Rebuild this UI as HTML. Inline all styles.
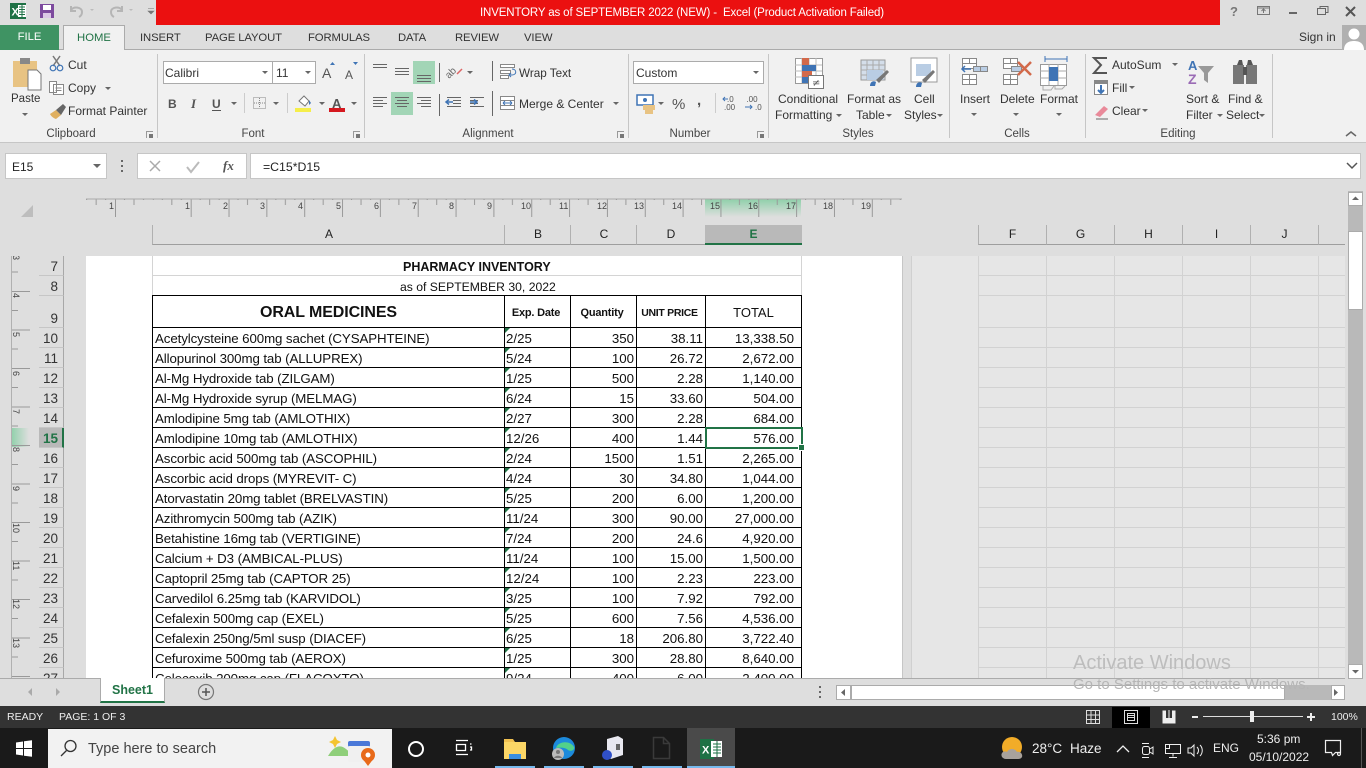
<!DOCTYPE html>
<html><head><meta charset="utf-8"><title>Excel</title>
<style>
*{box-sizing:border-box}
html,body{margin:0;padding:0;width:1366px;height:768px;overflow:hidden;background:#dedede}
body{font-family:"Liberation Sans",sans-serif;font-size:12px;color:#333;position:relative}
.a{position:absolute}
.t{position:absolute;white-space:nowrap;line-height:14px}
.tb{font-size:11.3px;letter-spacing:-.1px}
.sep{position:absolute;width:1px;background:#c6c6c6}
.arr{position:absolute;width:0;height:0;border-left:3px solid transparent;border-right:3px solid transparent;border-top:3px solid #666}
.gl{position:absolute;color:#444;top:127px;line-height:14px;transform:translateX(-50%);white-space:nowrap;font-size:11.5px}
.lau{position:absolute;top:131px;width:7px;height:7px;border-left:1px solid #999;border-top:1px solid #999}
.lau:after{content:"";position:absolute;right:0;bottom:0;width:4px;height:4px;background:#777}
.hd{position:absolute;top:225px;height:20px;border-bottom:1px solid #9e9e9e;border-left:1px solid #b0b0b0;color:#222;text-align:center;line-height:18px;font-size:12px}
#sheet{position:absolute;left:0;top:256px;width:1345px;height:422px;overflow:hidden}
.rn{position:absolute;left:39px;width:25px;height:20px;line-height:22px;border-bottom:1px solid #c6c6c6;border-right:1px solid #a8a8a8;text-align:right;padding-right:5px;color:#333;font-size:13.5px;background:#dedede}
table{position:absolute;left:152px;top:39px;border-collapse:collapse;table-layout:fixed;width:649px;font-family:"Liberation Sans",sans-serif;color:#111}
td{border:1px solid #000;height:20px;padding:3px 0 0;font-size:13.3px;line-height:16px;white-space:nowrap;overflow:hidden;position:relative}
td.n{padding-left:2px;letter-spacing:-.1px}
td.d{padding-left:1px}
td.d:before{content:"";position:absolute;left:0;top:0;border-top:5px solid #217346;border-right:5px solid transparent}
td.r{text-align:right;padding-right:2px}
td.m{text-align:right;padding-right:7px}
tr.h td{height:32px;text-align:center;font-weight:bold;font-size:11px;letter-spacing:-.2px;padding:2px 3px 0 0;line-height:18px}
</style></head><body>

<!-- title bar -->
<div class="a" style="left:156px;top:0;width:1064px;height:25px;background:#eb1010"></div>
<div class="t" style="left:480px;top:6px;color:#fff;font-size:11.5px;letter-spacing:-.14px">INVENTORY as of SEPTEMBER 2022 (NEW) -&nbsp; Excel (Product Activation Failed)</div>
<svg class="a" style="left:0;top:0" width="156" height="25">
<rect x="10" y="3" width="16" height="16" fill="#1e7145"/><rect x="18" y="5" width="8" height="12" fill="#fff"/>
<path d="M19 7h6M19 9.500h6M19 12h6M19 14.500h6M22 5v12" stroke="#1e7145" stroke-width="1"/>
<text x="11.500" y="15.500" font-family="Liberation Sans" font-size="11" font-weight="bold" fill="#fff">X</text>
<rect x="40" y="4" width="14" height="14" fill="#7d4a9e"/><rect x="43" y="5" width="8" height="5" fill="#fff"/><rect x="43" y="13" width="8" height="5" fill="#dcc8e6"/>
<path d="M71 6v5h5M71 10c3-4 11-3 11 2 0 2-1 4-3 5" fill="none" stroke="#b5b5b5" stroke-width="2"/>
<path d="M90 9l2 2 2-2z" fill="#bbb"/>
<path d="M122 6v5h-5M122 10c-3-4-11-3-11 2 0 2 1 4 3 5" fill="none" stroke="#b5b5b5" stroke-width="2"/>
<path d="M129 9l2 2 2-2z" fill="#bbb"/>
<path d="M148 8.500h6M148 11l3 3 3-3z" stroke="#777" fill="#777" stroke-width=".6"/>
</svg>
<svg class="a" style="left:1225px;top:0" width="141" height="25">
<text x="5" y="16" font-family="Liberation Sans" font-size="13" font-weight="bold" fill="#777">?</text>
<rect x="32.500" y="6.500" width="12" height="8" fill="none" stroke="#777"/><path d="M38.500 13V9M36.500 11l2-2 2 2M32 8h13" stroke="#777" fill="none"/>
<path d="M64 13h8" stroke="#666" stroke-width="2"/>
<path d="M92.500 8.500h8v6h-8zM95 8V6.500h8v6h-2" fill="none" stroke="#666"/>
<path d="M121 7l9 9M130 7l-9 9" stroke="#555" stroke-width="2"/>
</svg>

<!-- tabs -->
<div class="a" style="left:0;top:25px;width:1366px;height:25px;background:#dedede;border-bottom:1px solid #ababab"></div>
<div class="a" style="left:0;top:25px;width:59px;height:25px;background:#3f9363;color:#fff;text-align:center;line-height:25px;font-size:11.3px">FILE</div>
<div class="a" style="left:63px;top:25px;width:62px;height:26px;background:#f1f1f1;border:1px solid #ababab;border-bottom:none;color:#217346;text-align:center;line-height:24px;font-size:11.3px">HOME</div>
<div class="t tb" style="left:140px;top:31px">INSERT</div>
<div class="t tb" style="left:205px;top:31px">PAGE LAYOUT</div>
<div class="t tb" style="left:308px;top:31px">FORMULAS</div>
<div class="t tb" style="left:398px;top:31px">DATA</div>
<div class="t tb" style="left:455px;top:31px">REVIEW</div>
<div class="t tb" style="left:524px;top:31px">VIEW</div>
<div class="t" style="left:1299px;top:30px">Sign in</div>
<svg class="a" style="left:1342px;top:25px" width="24" height="25"><rect width="24" height="25" fill="#b0b0b0"/><circle cx="12" cy="9" r="5.500" fill="#fff"/><path d="M2 25c0-7 5-9 10-9s10 2 10 9z" fill="#fff"/></svg>

<!-- ribbon -->
<div class="a" style="left:0;top:50px;width:1366px;height:93px;background:#f1f1f1;border-bottom:1px solid #c6c6c6"></div>
<div class="a" style="left:64px;top:49px;width:60px;height:2px;background:#f1f1f1"></div>
<div class="sep" style="left:157px;top:54px;height:84px"></div>
<div class="sep" style="left:364px;top:54px;height:84px"></div>
<div class="sep" style="left:628px;top:54px;height:84px"></div>
<div class="sep" style="left:768px;top:54px;height:84px"></div>
<div class="sep" style="left:949px;top:54px;height:84px"></div>
<div class="sep" style="left:1085px;top:54px;height:84px"></div>
<div class="sep" style="left:1272px;top:54px;height:84px"></div>
<div class="gl" style="left:71px">Clipboard</div><div class="lau" style="left:146px"></div>
<div class="gl" style="left:253px">Font</div><div class="lau" style="left:353px"></div>
<div class="gl" style="left:488px">Alignment</div><div class="lau" style="left:617px"></div>
<div class="gl" style="left:690px">Number</div><div class="lau" style="left:757px"></div>
<div class="gl" style="left:858px">Styles</div>
<div class="gl" style="left:1017px">Cells</div>
<div class="gl" style="left:1178px">Editing</div>
<svg class="a" style="left:1345px;top:130px" width="12" height="8"><path d="M1 6l5-4 5 4" fill="none" stroke="#666" stroke-width="1.500"/></svg>

<!-- clipboard -->
<svg class="a" style="left:0;top:52px" width="160" height="75">
<rect x="13" y="9" width="24" height="26" fill="#e8c383"/><rect x="20" y="6" width="10" height="6" fill="#888"/>
<path d="M28 18h9l4 4v16H28z" fill="#fff" stroke="#777"/>
<path d="M53 14l7-10M60 14l-7-10" stroke="#777" stroke-width="1.500"/><circle cx="53" cy="16" r="2.800" fill="none" stroke="#3f74b5" stroke-width="1.200"/><circle cx="60" cy="16" r="2.800" fill="none" stroke="#3f74b5" stroke-width="1.200"/>
<path d="M49.500 29.500h7v11h-7zM53.500 32.500h10v10h-10z" fill="#fff" stroke="#888"/><path d="M55.500 36h6M55.500 38.500h6" stroke="#888"/>
<path d="M50 62l6-4 5 5-5 4c-3-1-5-3-6-5z" fill="#e0b060"/><path d="M56 58l7-6 3 3-5 8z" fill="#666"/>
</svg>
<div class="t" style="left:68px;top:58px">Cut</div>
<div class="t" style="left:68px;top:81px">Copy</div><div class="arr" style="left:105px;top:87px"></div>
<div class="t" style="left:68px;top:104px">Format Painter</div>
<div class="t" style="left:11px;top:92px;font-size:11.500px">Paste</div><div class="arr" style="left:22px;top:113px"></div>

<!-- font -->
<div class="a" style="left:163px;top:61px;width:110px;height:23px;background:#fff;border:1px solid #ababab"></div>
<div class="a" style="left:272px;top:61px;width:44px;height:23px;background:#fff;border:1px solid #ababab"></div>
<div class="t" style="left:165px;top:66px">Calibri</div><div class="t" style="left:276px;top:66px">11</div>
<div class="arr" style="left:262px;top:71px"></div><div class="arr" style="left:305px;top:71px"></div>
<div class="t" style="left:322px;top:66px;font-size:14px;color:#555">A</div>
<div class="t" style="left:345px;top:68px;font-size:12px;color:#555">A</div>
<svg class="a" style="left:320px;top:60px" width="40" height="10"><path d="M10 5l2.500-3 2.500 3z" fill="#3f74b5"/><path d="M33 2l2.500 3 2.500-3z" fill="#3f74b5"/></svg>
<svg class="a" style="left:160px;top:90px" width="204" height="30">
<text x="8" y="18" font-family="Liberation Sans" font-size="12" font-weight="bold" fill="#555">B</text>
<text x="31" y="18" font-family="Liberation Serif" font-size="13" font-style="italic" font-weight="bold" fill="#555">I</text>
<text x="52" y="18" font-family="Liberation Sans" font-size="12" font-weight="bold" fill="#555">U</text><path d="M52 20.500h9" stroke="#555"/>
<path d="M71 12l3 3 3-3z" fill="#666"/><path d="M84.500 3v20M127.500 3v20" stroke="#ccc"/>
<rect x="93.500" y="7.500" width="12" height="11" fill="none" stroke="#888" stroke-dasharray="1 1"/><path d="M99.500 8v10M94 13h11" stroke="#888" stroke-dasharray="1 1"/>
<path d="M113 12l3 3 3-3z" fill="#666"/>
<path d="M139 11l5-5 5 5-4 5z" fill="#fff" stroke="#777"/><path d="M149 10l2 3-2 2z" fill="#3f74b5"/><rect x="135" y="18" width="16" height="4" fill="#f5ee4a"/>
<path d="M159 12l3 3 3-3z" fill="#666"/>
<text x="172" y="18" font-family="Liberation Sans" font-size="13" font-weight="bold" fill="#555">A</text><rect x="169" y="18" width="16" height="4" fill="#d5181f"/>
<path d="M191 12l3 3 3-3z" fill="#666"/>
</svg>

<!-- alignment -->
<div class="a" style="left:413px;top:61px;width:22px;height:23px;background:#a2d5b6"></div>
<div class="a" style="left:391px;top:92px;width:22px;height:23px;background:#a2d5b6"></div>
<svg class="a" style="left:365px;top:55px" width="265" height="65">
<g stroke="#666" fill="none">
<path d="M8 9.500h14M8 12.500h14"/><path d="M30 13.500h14M30 16.500h14M30 19.500h14"/><path d="M52 20.500h14M52 23.500h14M52 26.500h14"/>
<path d="M8 42.500h14M8 45.500h10M8 48.500h14M8 51.500h10"/><path d="M30 42.500h14M32 45.500h10M30 48.500h14M32 51.500h10"/><path d="M52 42.500h14M56 45.500h10M52 48.500h14M56 51.500h10"/>
<path d="M74.500 8v19M74.500 39v22"/>
<path d="M82 42.500h14M88 45.500h8M88 48.500h8M82 51.500h14"/><path d="M105 42.500h14M105 45.500h8M105 48.500h8M105 51.500h14"/>
<path d="M127.500 6v20M127.500 36v25"/>
</g>
<text x="84" y="24" font-family="Liberation Sans" font-size="10" fill="#666" transform="rotate(-45 84 24)">ab</text>
<path d="M92 19l5-5" stroke="#d66" stroke-width="1.500"/><path d="M102 16l3 3 3-3z" fill="#666"/>
<path d="M81 47h7M84 44.500l-3 2.500 3 2.500" stroke="#3f74b5" fill="none" stroke-width="1.500"/>
<path d="M105 47h7M109 44.500l3 2.500-3 2.500" stroke="#3f74b5" fill="none" stroke-width="1.500"/>
<rect x="135.500" y="9.500" width="14" height="3" fill="#fff" stroke="#888"/><rect x="135.500" y="15.500" width="10" height="3" fill="#fff" stroke="#888"/><rect x="135.500" y="20.500" width="8" height="3" fill="#fff" stroke="#888"/><path d="M147 14c5 0 5 6 0 6h-2M146 18l-2 2 2 2" fill="none" stroke="#3f74b5"/>
<rect x="135.500" y="41.500" width="14" height="13" fill="#fff" stroke="#888"/><path d="M135 45.500h15M135 50.500h15" stroke="#888"/><path d="M138 48h9M138 48l2-2M138 48l2 2M147 48l-2-2M147 48l-2 2" stroke="#3f74b5" fill="none"/>
<path d="M248 47l3 3 3-3z" fill="#666"/>
</svg>
<div class="t" style="left:519px;top:67px;font-size:11.700px">Wrap Text</div>
<div class="t" style="left:519px;top:97px">Merge &amp; Center</div>

<!-- number -->
<div class="a" style="left:633px;top:61px;width:131px;height:23px;background:#fff;border:1px solid #ababab"></div>
<div class="t" style="left:636px;top:66px">Custom</div><div class="arr" style="left:753px;top:71px"></div>
<svg class="a" style="left:630px;top:90px" width="136" height="30">
<rect x="7" y="5" width="16" height="10" fill="#fff" stroke="#3f74b5" stroke-width="1.500"/><circle cx="15" cy="10" r="2" fill="#3f74b5"/><path d="M13 15h12v5H13zM15 20h8v4h-8z" fill="#e8c383"/>
<path d="M28 12l3 3 3-3z" fill="#666"/>
<text x="42" y="19" font-family="Liberation Sans" font-size="15" fill="#555">%</text>
<text x="67" y="15" font-family="Liberation Sans" font-size="15" font-weight="bold" fill="#555">,</text>
<path d="M85.500 3v20" stroke="#ccc"/>
<text x="97" y="12" font-family="Liberation Sans" font-size="8" fill="#555">.0</text><text x="94" y="20" font-family="Liberation Sans" font-size="8" fill="#555">.00</text>
<path d="M93 9h5M95 7l-2 2 2 2" stroke="#3f74b5" fill="none"/>
<text x="122" y="12" font-family="Liberation Sans" font-size="8" fill="#555" text-anchor="middle">.00</text><text x="125" y="20" font-family="Liberation Sans" font-size="8" fill="#555">.0</text>
<path d="M115 17h7M120 15l2 2-2 2" stroke="#3f74b5" fill="none"/>
</svg>

<!-- styles icons -->
<svg class="a" style="left:770px;top:52px" width="180" height="45">
<rect x="25.500" y="6.500" width="27" height="25" fill="#fff" stroke="#999"/><path d="M32 6v25M39 6v25M46 6v25M25 13h27M25 19h27M25 25h27" stroke="#bbb"/>
<rect x="32" y="6" width="7" height="7" fill="#d2694a"/><rect x="32" y="13" width="14" height="6" fill="#3f74b5"/><rect x="32" y="19" width="10" height="6" fill="#d2694a"/><rect x="32" y="25" width="7" height="6" fill="#3f74b5"/>
<rect x="38.500" y="23.500" width="15" height="13" fill="#fff" stroke="#777"/><text x="42" y="34" font-family="DejaVu Sans" font-size="10" fill="#555">≠</text>
<rect x="91" y="8" width="24" height="20" fill="#d4deea" stroke="#999"/><path d="M97 8v20M103 8v20M109 8v20M91 13h24M91 18h24M91 23h24" stroke="#aaa"/><rect x="97" y="18" width="16" height="10" fill="#b9cde4"/>
<path d="M100 34c0-4 3-6 6-4l-1 4z" fill="#3f74b5"/><path d="M106 28l11-10 2 2-10 11z" fill="#777"/>
<rect x="141" y="6" width="26" height="24" fill="#fff" stroke="#999"/><rect x="146" y="12" width="15" height="12" fill="#b9cde4"/>
<path d="M146 35c0-4 3-6 6-4l-1 4z" fill="#3f74b5"/><path d="M152 28l11-10 2 2-10 11z" fill="#777"/>
</svg>
<div class="t" style="left:778px;top:92px">Conditional</div>
<div class="t" style="left:775px;top:108px">Formatting</div><div class="arr" style="left:836px;top:114px"></div>
<div class="t" style="left:847px;top:92px">Format as</div>
<div class="t" style="left:856px;top:108px">Table</div><div class="arr" style="left:886px;top:114px"></div>
<div class="t" style="left:914px;top:92px">Cell</div>
<div class="t" style="left:904px;top:108px">Styles</div><div class="arr" style="left:937px;top:114px"></div>

<!-- cells -->
<svg class="a" style="left:950px;top:52px" width="135" height="45">
<g fill="#fff" stroke="#888"><path d="M12.500 6.500h14v10h-14zM12.500 11.500h14M19.500 6.500v5"/><path d="M12.500 22.500h14v10h-14zM12.500 27.500h14M19.500 22.500v10"/><rect x="23.500" y="14.500" width="14" height="5" fill="#b9cde4"/><path d="M30.500 14v6"/></g>
<path d="M21 17h-9M15 14l-3 3 3 3" stroke="#3f74b5" stroke-width="1.500" fill="none"/>
<g fill="#fff" stroke="#888"><path d="M53.500 6.500h14v10h-14zM53.500 11.500h14M60.500 6.500v5"/><path d="M53.500 22.500h14v10h-14zM53.500 27.500h14M60.500 22.500v10"/><rect x="61.500" y="14.500" width="10" height="5" fill="#b9cde4"/></g>
<path d="M68 10l13 13M81 10l-13 13" stroke="#d2694a" stroke-width="2.500"/>
<path d="M95 7h22M95 4v6M117 4v6" stroke="#3f74b5" fill="none"/>
<rect x="90.500" y="12.500" width="26" height="21" fill="#fff" stroke="#999"/><path d="M99 12v21M108 12v21M90 19h27M90 26h27" stroke="#aaa"/><rect x="99" y="15" width="9" height="14" fill="#3f74b5"/><path d="M93 34v4h8l3-4M105 34v3h7l3-3" fill="none" stroke="#aaa"/>
</svg>
<div class="t" style="left:960px;top:92px">Insert</div><div class="arr" style="left:971px;top:113px"></div>
<div class="t" style="left:1000px;top:92px">Delete</div><div class="arr" style="left:1013px;top:113px"></div>
<div class="t" style="left:1040px;top:92px">Format</div><div class="arr" style="left:1056px;top:113px"></div>

<!-- editing -->
<svg class="a" style="left:1086px;top:52px" width="190" height="70">
<path d="M21 6H8l7 7-7 8h13" fill="none" stroke="#555" stroke-width="2"/>
<rect x="8.500" y="28.500" width="13" height="14" fill="#fff" stroke="#888"/><rect x="8" y="28" width="14" height="4" fill="#888"/><path d="M15 33v8M12 38l3 3 3-3" stroke="#3f74b5" stroke-width="2" fill="none"/>
<path d="M9 63l9-9 4 3-8 8z" fill="#e98a9a"/><path d="M10 67h12" stroke="#666"/>
<text x="102" y="18" font-family="Liberation Sans" font-size="13" font-weight="bold" fill="#3f74b5">A</text>
<text x="102" y="32" font-family="Liberation Sans" font-size="14" font-weight="bold" fill="#9a6bb5">Z</text>
<path d="M112 14h16l-6 7v10l-4-3v-7z" fill="#999"/>
<path d="M151 13l2-5h3l1 5zM161 13l1-5h3l2 5z" fill="#555"/><rect x="147" y="13" width="11" height="19" fill="#777"/><rect x="160" y="13" width="11" height="19" fill="#777"/><rect x="157" y="15" width="4" height="8" fill="#555"/>
</svg>
<div class="t" style="left:1112px;top:58px">AutoSum</div><div class="arr" style="left:1172px;top:63px"></div>
<div class="t" style="left:1112px;top:81px">Fill</div><div class="arr" style="left:1129px;top:86px"></div>
<div class="t" style="left:1112px;top:104px">Clear</div><div class="arr" style="left:1142px;top:109px"></div>
<div class="t" style="left:1186px;top:92px">Sort &amp;</div>
<div class="t" style="left:1186px;top:108px">Filter</div><div class="arr" style="left:1217px;top:114px"></div>
<div class="t" style="left:1228px;top:92px">Find &amp;</div>
<div class="t" style="left:1226px;top:108px">Select</div><div class="arr" style="left:1259px;top:114px"></div>

<!-- formula bar -->
<div class="a" style="left:5px;top:153px;width:102px;height:26px;background:#fff;border:1px solid #c6c6c6"></div>
<div class="t" style="left:12px;top:160px;color:#222">E15</div>
<div class="arr" style="left:93px;top:164px;border-left-width:4px;border-right-width:4px;border-top-width:4px"></div>
<svg class="a" style="left:118px;top:158px" width="8" height="16"><path d="M4 2v2M4 7v2M4 12v2" stroke="#666" stroke-width="2"/></svg>
<div class="a" style="left:137px;top:153px;width:110px;height:26px;background:#fff;border:1px solid #c6c6c6"></div>
<svg class="a" style="left:140px;top:155px" width="105" height="22">
<path d="M10 6l10 10M20 6l-10 10" stroke="#aaa" stroke-width="1.500"/><path d="M47 12l4 5 8-10" stroke="#bbb" stroke-width="2" fill="none"/>
<text x="83" y="15" font-family="Liberation Serif" font-size="13" font-style="italic" font-weight="bold" fill="#555">fx</text>
</svg>
<div class="a" style="left:250px;top:153px;width:1111px;height:26px;background:#fff;border:1px solid #c6c6c6"></div>
<div class="t" style="left:263px;top:160px;color:#222;font-size:12.300px">=C15*D15</div>
<svg class="a" style="left:1346px;top:161px" width="12" height="9"><path d="M1 2l5 5 5-5" fill="none" stroke="#555" stroke-width="1.500"/></svg>

<!-- corner -->
<svg class="a" style="left:20px;top:204px" width="14" height="13"><path d="M13 1v12H1z" fill="#bdbdbd"/></svg>

<!-- ruler top -->
<div class="a" style="left:705px;top:199px;width:96px;height:18px;background:linear-gradient(#8fd0aa,#dedede)"></div>
<svg class="a" style="left:86px;top:198px" width="816" height="20">
<defs><pattern id="rt" x="29" y="0" width="37.840" height="20" patternUnits="userSpaceOnUse">
<path d="M.5 1v18" stroke="#999"/><path d="M19 1v6" stroke="#999"/><path d="M9.500 1v1M28.500 1v1" stroke="#888"/></pattern></defs>
<rect x="0" y="0" width="816" height="20" fill="url(#rt)"/>
<rect x="66" y="2" width="2" height="18" fill="#dedede"/>
<path d="M0 1h816" stroke="#aaa"/>
</svg>
<svg class="a" style="left:100px;top:199px" width="810" height="16" font-family="Liberation Sans" font-size="9" fill="#444">
<text x="9" y="10">1</text><text x="85" y="10">1</text><text x="123" y="10">2</text><text x="160" y="10">3</text><text x="198" y="10">4</text><text x="236" y="10">5</text><text x="274" y="10">6</text><text x="312" y="10">7</text><text x="349" y="10">8</text><text x="387" y="10">9</text><text x="421" y="10">10</text><text x="459" y="10">11</text><text x="497" y="10">12</text><text x="534" y="10">13</text><text x="572" y="10">14</text><text x="610" y="10">15</text><text x="648" y="10">16</text><text x="686" y="10">17</text><text x="723" y="10">18</text><text x="761" y="10">19</text>
</svg>

<!-- column headers -->
<div class="hd" style="left:152px;width:353px">A</div>
<div class="hd" style="left:504px;width:67px">B</div>
<div class="hd" style="left:570px;width:67px">C</div>
<div class="hd" style="left:636px;width:69px">D</div>
<div class="hd" style="left:705px;width:97px;background:#b9b9b9;border-left:none;border-bottom:2px solid #217346;color:#217346;font-weight:bold;height:20px">E</div>
<div class="hd" style="left:978px;width:68px">F</div>
<div class="hd" style="left:1046px;width:68px">G</div>
<div class="hd" style="left:1114px;width:68px">H</div>
<div class="hd" style="left:1182px;width:68px">I</div>
<div class="hd" style="left:1250px;width:68px">J</div>
<div class="hd" style="left:1318px;width:27px"></div>

<!-- sheet -->
<div id="sheet">
<!-- left ruler -->
<div class="a" style="left:11px;top:172px;width:18px;height:19px;background:linear-gradient(90deg,#8fd0aa,#dedede)"></div>
<svg class="a" style="left:10px;top:0" width="20" height="422">
<defs><pattern id="rl" x="0" y="35" width="20" height="38.500" patternUnits="userSpaceOnUse"><path d="M1 .5h19" stroke="#999"/><path d="M1 19.500h7" stroke="#999"/></pattern></defs>
<rect width="20" height="422" fill="url(#rl)"/><path d="M1.500 0v422" stroke="#b0b0b0"/>
<g font-family="Liberation Sans" font-size="9" fill="#444">
<text transform="translate(3 -1) rotate(90)">3</text><text transform="translate(3 37) rotate(90)">4</text><text transform="translate(3 76) rotate(90)">5</text><text transform="translate(3 115) rotate(90)">6</text><text transform="translate(3 153) rotate(90)">7</text><text transform="translate(3 191) rotate(90)">8</text><text transform="translate(3 230) rotate(90)">9</text><text transform="translate(3 267) rotate(90)">10</text><text transform="translate(3 305) rotate(90)">11</text><text transform="translate(3 343) rotate(90)">12</text><text transform="translate(3 382) rotate(90)">13</text></g>
</svg>
<!-- row numbers -->
<div class="rn" style="top:0">7</div>
<div class="rn" style="top:20px">8</div>
<div class="rn" style="top:40px;height:32px;line-height:46px">9</div>
<div class="rn" style="top:72px">10</div>
<div class="rn" style="top:92px">11</div>
<div class="rn" style="top:112px">12</div>
<div class="rn" style="top:132px">13</div>
<div class="rn" style="top:152px">14</div>
<div class="rn" style="top:172px;background:#b9b9b9;color:#217346;font-weight:bold;border-right:2px solid #217346;padding-right:4px">15</div>
<div class="rn" style="top:192px">16</div>
<div class="rn" style="top:212px">17</div>
<div class="rn" style="top:232px">18</div>
<div class="rn" style="top:252px">19</div>
<div class="rn" style="top:272px">20</div>
<div class="rn" style="top:292px">21</div>
<div class="rn" style="top:312px">22</div>
<div class="rn" style="top:332px">23</div>
<div class="rn" style="top:352px">24</div>
<div class="rn" style="top:372px">25</div>
<div class="rn" style="top:392px">26</div>
<div class="rn" style="top:412px">27</div>
<!-- page -->
<div class="a" style="left:86px;top:0;width:816px;height:422px;background:#fff"></div>
<div class="a" style="left:902px;top:0;width:1px;height:422px;background:#c6c6c6"></div>
<div class="a" style="left:152px;top:19px;width:650px;height:1px;background:#d4d4d4"></div>
<div class="a" style="left:152px;top:0;width:1px;height:39px;background:#d4d4d4"></div>
<div class="a" style="left:801px;top:0;width:1px;height:39px;background:#d4d4d4"></div>
<!-- outside grid -->
<div class="a" style="left:911px;top:0;width:434px;height:422px;background-color:#e6e6e6;border-left:1px solid #d0d0d0"></div>
<svg class="a" style="left:911px;top:0" width="434" height="422">
<path d="M67.500 0v422M135.500 0v422M203.500 0v422M271.500 0v422M339.500 0v422M407.500 0v422" stroke="#d2d2d2"/>
<path d="M67 19.500h367M67 39.500h367M67 71.500h367M67 91.500h367M67 111.500h367M67 131.500h367M67 151.500h367M67 171.500h367M67 191.500h367M67 211.500h367M67 231.500h367M67 251.500h367M67 271.500h367M67 291.500h367M67 311.500h367M67 331.500h367M67 351.500h367M67 371.500h367M67 391.500h367M67 411.500h367" stroke="#d2d2d2"/>
</svg>
<div class="t" style="left:403px;top:4px;font-weight:bold;font-size:12.500px;color:#111">PHARMACY INVENTORY</div>
<div class="t" style="left:400px;top:24px;font-size:12.200px;color:#111">as of SEPTEMBER 30, 2022</div>
<table>
<colgroup><col style="width:352px"><col style="width:66px"><col style="width:66px"><col style="width:69px"><col style="width:96px"></colgroup>
<tr class="h"><td style="font-size:16px;letter-spacing:-.1px;padding-right:0">ORAL MEDICINES</td><td>Exp. Date</td><td>Quantity</td><td style="font-size:10.500px;letter-spacing:-.3px">UNIT PRICE</td><td style="font-weight:normal;font-size:13px;letter-spacing:0;padding-right:0">TOTAL</td></tr>
<tr><td class="n">Acetylcysteine 600mg sachet (CYSAPHTEINE)</td><td class="d">2/25</td><td class="r">350</td><td class="r">38.11</td><td class="m">13,338.50</td></tr>
<tr><td class="n">Allopurinol 300mg tab (ALLUPREX)</td><td class="d">5/24</td><td class="r">100</td><td class="r">26.72</td><td class="m">2,672.00</td></tr>
<tr><td class="n">Al-Mg Hydroxide tab (ZILGAM)</td><td class="d">1/25</td><td class="r">500</td><td class="r">2.28</td><td class="m">1,140.00</td></tr>
<tr><td class="n">Al-Mg Hydroxide syrup (MELMAG)</td><td class="d">6/24</td><td class="r">15</td><td class="r">33.60</td><td class="m">504.00</td></tr>
<tr><td class="n">Amlodipine 5mg tab (AMLOTHIX)</td><td class="d">2/27</td><td class="r">300</td><td class="r">2.28</td><td class="m">684.00</td></tr>
<tr><td class="n">Amlodipine 10mg tab (AMLOTHIX)</td><td class="d">12/26</td><td class="r">400</td><td class="r">1.44</td><td class="m">576.00</td></tr>
<tr><td class="n">Ascorbic acid 500mg tab (ASCOPHIL)</td><td class="d">2/24</td><td class="r">1500</td><td class="r">1.51</td><td class="m">2,265.00</td></tr>
<tr><td class="n">Ascorbic acid drops (MYREVIT- C)</td><td class="d">4/24</td><td class="r">30</td><td class="r">34.80</td><td class="m">1,044.00</td></tr>
<tr><td class="n">Atorvastatin 20mg tablet (BRELVASTIN)</td><td class="d">5/25</td><td class="r">200</td><td class="r">6.00</td><td class="m">1,200.00</td></tr>
<tr><td class="n">Azithromycin 500mg tab (AZIK)</td><td class="d">11/24</td><td class="r">300</td><td class="r">90.00</td><td class="m">27,000.00</td></tr>
<tr><td class="n">Betahistine 16mg tab (VERTIGINE)</td><td class="d">7/24</td><td class="r">200</td><td class="r">24.6</td><td class="m">4,920.00</td></tr>
<tr><td class="n">Calcium + D3 (AMBICAL-PLUS)</td><td class="d">11/24</td><td class="r">100</td><td class="r">15.00</td><td class="m">1,500.00</td></tr>
<tr><td class="n">Captopril 25mg tab (CAPTOR 25)</td><td class="d">12/24</td><td class="r">100</td><td class="r">2.23</td><td class="m">223.00</td></tr>
<tr><td class="n">Carvedilol 6.25mg tab (KARVIDOL)</td><td class="d">3/25</td><td class="r">100</td><td class="r">7.92</td><td class="m">792.00</td></tr>
<tr><td class="n">Cefalexin 500mg cap (EXEL)</td><td class="d">5/25</td><td class="r">600</td><td class="r">7.56</td><td class="m">4,536.00</td></tr>
<tr><td class="n">Cefalexin 250ng/5ml susp (DIACEF)</td><td class="d">6/25</td><td class="r">18</td><td class="r">206.80</td><td class="m">3,722.40</td></tr>
<tr><td class="n">Cefuroxime 500mg tab (AEROX)</td><td class="d">1/25</td><td class="r">300</td><td class="r">28.80</td><td class="m">8,640.00</td></tr>
<tr><td class="n">Celecoxib 200mg cap (FLACOXTO)</td><td class="d">9/24</td><td class="r">400</td><td class="r">6.00</td><td class="m">2,400.00</td></tr>
</table>
<!-- selection -->
<div class="a" style="left:705px;top:171px;width:98px;height:22px;border:2px solid #217346"></div>
<div class="a" style="left:799px;top:189px;width:5px;height:5px;background:#217346;outline:1px solid #fff"></div>
</div>

<!-- vertical scrollbar -->
<div class="a" style="left:1348px;top:191px;width:15px;height:488px;background:#b9b9b9"></div>
<div class="a" style="left:1348px;top:192px;width:15px;height:14px;background:#fff;border:1px solid #ababab"></div>
<div class="a" style="left:1348px;top:231px;width:15px;height:79px;background:#fff;border:1px solid #ababab"></div>
<div class="a" style="left:1348px;top:664px;width:15px;height:15px;background:#fff;border:1px solid #ababab"></div>
<svg class="a" style="left:1348px;top:191px" width="15" height="488"><path d="M4 9l3.500-3.500L11 9z" fill="#666"/><path d="M4 479l3.500 3.500L11 479z" fill="#666"/></svg>

<!-- tab bar -->
<div class="a" style="left:0;top:678px;width:1345px;height:28px;background:#dedede;border-top:1px solid #ababab"></div>
<div class="a" style="left:1345px;top:679px;width:21px;height:27px;background:#dedede"></div>
<svg class="a" style="left:24px;top:685px" width="40" height="14"><path d="M8 3L4 7l4 4zM32 3l4 4-4 4z" fill="#aaa"/></svg>
<div class="a" style="left:100px;top:678px;width:65px;height:25px;background:#fff;border:1px solid #ababab;border-top:none;border-bottom:2px solid #217346;color:#217346;font-weight:bold;text-align:center;line-height:25px;font-size:12.500px">Sheet1</div>
<svg class="a" style="left:197px;top:683px" width="18" height="18"><circle cx="9" cy="9" r="7.500" fill="none" stroke="#777" stroke-width="1.200"/><path d="M5 9h8M9 5v8" stroke="#555" stroke-width="1.500"/></svg>
<svg class="a" style="left:816px;top:684px" width="8" height="16"><path d="M4 2v2M4 7v2M4 12v2" stroke="#666" stroke-width="2"/></svg>
<div class="a" style="left:836px;top:685px;width:508px;height:15px;background:#b9b9b9"></div>
<div class="a" style="left:851px;top:685px;width:434px;height:15px;background:#fff;border:1px solid #ababab"></div>
<div class="a" style="left:836px;top:685px;width:15px;height:15px;background:#fff;border:1px solid #ababab"></div>
<div class="a" style="left:1331px;top:685px;width:14px;height:15px;background:#fff;border:1px solid #ababab"></div>
<svg class="a" style="left:836px;top:685px" width="510" height="15"><path d="M9 4L5 7.500 9 11zM498 4l4 3.500-4 3.500z" fill="#666"/></svg>

<!-- activate -->
<div class="t" style="left:1073px;top:651px;font-size:20px;line-height:24px;color:#bdbdbd">Activate Windows</div>
<div class="t" style="left:1073px;top:677px;font-size:15px;line-height:16px;color:#b5b5b5">Go to Settings to activate Windows.</div>

<!-- status -->
<div class="a" style="left:0;top:706px;width:1366px;height:22px;background:#333"></div>
<div class="t" style="left:7px;top:710px;color:#eee;font-size:10.500px">READY</div>
<div class="t" style="left:59px;top:710px;color:#eee;font-size:10.500px">PAGE: 1 OF 3</div>
<div class="a" style="left:1112px;top:707px;width:38px;height:21px;background:#000"></div>
<svg class="a" style="left:1080px;top:706px" width="286" height="22">
<path d="M6.500 4.500h13v13h-13zM11 4.500v13M15.500 4.500v13M6.500 9h13M6.500 13.500h13" fill="none" stroke="#ddd"/>
<rect x="44.500" y="4.500" width="13" height="13" fill="none" stroke="#ddd"/><rect x="47.500" y="7.500" width="7" height="7" fill="none" stroke="#ddd"/><path d="M48 9.500h6M48 11.500h6" stroke="#ddd"/>
<rect x="82.500" y="4.500" width="13" height="13" fill="#eee"/><path d="M86 4v8h6V4" fill="#333"/><path d="M89 4v9" stroke="#eee"/>
<path d="M112 11h6" stroke="#eee" stroke-width="2"/><path d="M123 10.500h100" stroke="#ddd"/><rect x="170" y="5" width="4" height="11" fill="#eee"/>
<path d="M227 11h8M231 7v8" stroke="#eee" stroke-width="2"/>
</svg>
<div class="t" style="left:1331px;top:710px;color:#eee;font-size:10.500px">100%</div>

<!-- taskbar -->
<div class="a" style="left:0;top:728px;width:1366px;height:40px;background:#1a1a1a"></div>
<svg class="a" style="left:16px;top:740px" width="17" height="17"><path d="M0 2.500l7-1v6.500H0zM8 1.300L16 .2v7.800H8zM0 9h7v6.500l-7-1zM8 9h8v7.800l-8-1.100z" fill="#fff"/></svg>
<div class="a" style="left:48px;top:729px;width:344px;height:39px;background:#f2f2f2"></div>
<svg class="a" style="left:58px;top:738px" width="22" height="20"><circle cx="12.500" cy="8" r="5.500" fill="none" stroke="#333" stroke-width="1.300"/><path d="M8.500 12.500L3 18" stroke="#333" stroke-width="1.300"/></svg>
<div class="t" style="left:88px;top:741px;font-size:14.500px;line-height:16px;color:#444">Type here to search</div>
<svg class="a" style="left:326px;top:731px" width="52" height="36">
<path d="M7 3l2 4 4 2-4 2-2 4-2-4-4-2 4-2z" fill="#f4c430" transform="translate(2 2)"/><path d="M2 25c6-10 12-12 18-7 4 3 6 7 6 7z" fill="#8fcf7a"/>
<rect x="22" y="10" width="22" height="6" fill="#4a78d8" rx="2"/><rect x="22" y="15" width="22" height="16" fill="#f0f0f0" rx="2"/>
<circle cx="42" cy="24" r="7" fill="#e86a1a"/><circle cx="42" cy="24" r="2.500" fill="#fff"/><path d="M36 27l6 8 6-8z" fill="#e86a1a"/>
</svg>
<svg class="a" style="left:405px;top:738px" width="22" height="22"><circle cx="11" cy="11" r="7" fill="none" stroke="#fff" stroke-width="2"/></svg>
<svg class="a" style="left:454px;top:739px" width="20" height="20"><path d="M2 1.500h12M2 15.500h12M2.500 5.500h9v6h-9zM16 5h1.500M16 8h1.500v3H16" fill="none" stroke="#fff" stroke-width="1.300"/></svg>
<svg class="a" style="left:503px;top:736px" width="24" height="24"><path d="M1 3h9l2 3h11v17H1z" fill="#f0c050"/><path d="M1 6h22v17H1z" fill="#fbd666"/><rect x="6" y="18" width="12" height="5" fill="#3a8ee0"/></svg>
<svg class="a" style="left:551px;top:736px" width="26" height="26"><circle cx="13" cy="12" r="11" fill="#1c8adb"/><path d="M5 12c2-7 14-8 18-1 1 3-3 5-6 3-2-2-6-3-12-2z" fill="#52d18a"/><circle cx="7" cy="18" r="6" fill="#bbb"/><circle cx="7" cy="16" r="2" fill="#777"/><path d="M3 22c1-3 7-3 8 0z" fill="#777"/></svg>
<svg class="a" style="left:601px;top:735px" width="24" height="26"><path d="M6 4l11-3 5 3v16l-12 4-4-3z" fill="#e8e8f0"/><rect x="15" y="9" width="4" height="6" fill="#666"/><circle cx="6" cy="20" r="5" fill="#3050c8"/></svg>
<svg class="a" style="left:652px;top:736px" width="20" height="24"><path d="M1.500 1.500h10l6 6v15h-16zM11.500 1.500v6h6" fill="none" stroke="#3a3a3a" stroke-width="1.500"/></svg>
<div class="a" style="left:687px;top:728px;width:48px;height:40px;background:#4a4a4a"></div>
<svg class="a" style="left:699px;top:738px" width="24" height="22"><rect x="1" y="1" width="14" height="20" fill="#1e7145"/><rect x="12" y="3" width="11" height="16" fill="#fff"/><path d="M14 6h8M14 9h8M14 12h8M14 15h8M18 3v16" stroke="#1e7145"/><text x="3" y="15.500" font-family="Liberation Sans" font-size="11" font-weight="bold" fill="#fff">X</text></svg>
<div class="a" style="left:495px;top:766px;width:40px;height:2px;background:#76b9ed"></div>
<div class="a" style="left:544px;top:766px;width:40px;height:2px;background:#76b9ed"></div>
<div class="a" style="left:593px;top:766px;width:40px;height:2px;background:#76b9ed"></div>
<div class="a" style="left:642px;top:766px;width:40px;height:2px;background:#76b9ed"></div>
<div class="a" style="left:687px;top:766px;width:48px;height:2px;background:#76b9ed"></div>
<svg class="a" style="left:1000px;top:736px" width="24" height="24"><circle cx="12" cy="11" r="10" fill="#f2ac28"/><path d="M2 21c-2-4 2-7 5-5 2-4 8-4 10 0 3-1 6 2 5 5-1 2-3 2-5 2H6c-2 0-3-1-4-2z" fill="#a8a29c"/></svg>
<div class="t" style="left:1032px;top:741px;color:#eee;font-size:13.500px;line-height:16px">28°C</div>
<div class="t" style="left:1070px;top:741px;color:#eee;font-size:13.500px;line-height:16px">Haze</div>
<svg class="a" style="left:1115px;top:740px" width="100" height="20" fill="none" stroke="#eee">
<path d="M2 12l6-6 6 6" stroke-width="1.300"/>
<rect x="27.500" y="6.500" width="7" height="8" rx="2"/><path d="M35 9l3-2v7l-3-2M27 3.500h7M27 17.500h7"/>
<path d="M50.500 4.500h15v9h-15zM50.500 4.500h4v4h-4zM58 13.500v3M54 17.500h8"/>
<path d="M73 8h3l3-3v11l-3-3h-3zM82 7c2 2 2 5 0 7M85 5c3 3 3 8 0 11"/>
</svg>
<div class="t" style="left:1213px;top:741px;color:#eee;font-size:12px;line-height:14px">ENG</div>
<div class="t" style="left:1257px;top:732px;color:#eee;font-size:12px;line-height:14px">5:36 pm</div>
<div class="t" style="left:1249px;top:750px;color:#eee;font-size:12px;line-height:14px">05/10/2022</div>
<svg class="a" style="left:1324px;top:739px" width="20" height="20" fill="none" stroke="#eee" stroke-width="1.200"><path d="M1.500 1.500h15v12h-5l-3 3-1-3h-6z"/><circle cx="15" cy="15" r="1.500"/></svg>
<div class="a" style="left:1361px;top:728px;width:1px;height:40px;background:#555"></div>
</body></html>
